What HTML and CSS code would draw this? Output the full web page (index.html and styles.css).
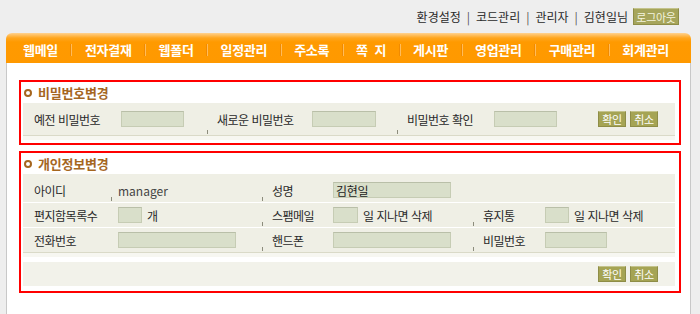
FILE: index.html
```html
<!DOCTYPE html>
<html lang="ko">
<head>
    <meta charset="UTF-8">
    <title>환경설정 - 개인정보변경</title>
    <link rel="stylesheet" href="styles.css">
</head>
<body>
    <div class="wrap">
        <div class="topbar">
            <span>환경설정</span><span class="bar">|</span>
            <span>코드관리</span><span class="bar">|</span>
            <span>관리자</span><span class="bar">|</span>
            <span>김현일님</span>
            <button class="btn-logout">로그아웃</button>
        </div>

        <!-- 상단 메뉴 -->
        <ul class="gnb">
            <li>웹메일</li><li class="sep"></li>
            <li>전자결재</li><li class="sep"></li>
            <li>웹폴더</li><li class="sep"></li>
            <li>일정관리</li><li class="sep"></li>
            <li>주소록</li><li class="sep"></li>
            <li>쪽&nbsp; 지</li><li class="sep"></li>
            <li>게시판</li><li class="sep"></li>
            <li>영업관리</li><li class="sep"></li>
            <li>구매관리</li><li class="sep"></li>
            <li>회계관리</li>
        </ul>

        <div class="content">
            <!-- 비밀번호변경 -->
            <div class="box">
                <h3 class="box-title"><span class="dot"></span>비밀번호변경</h3>
                <div class="strip">
                    <div class="pw-row">
                        <div class="pw-lbl1">예전 비밀번호</div>
                        <div class="pw-fld1"><input type="password" class="fld w63"></div>
                        <div class="pw-lbl2 tk">새로운 비밀번호</div>
                        <div class="pw-fld2"><input type="password" class="fld w64"></div>
                        <div class="pw-lbl3 tk">비밀번호 확인</div>
                        <div class="pw-fld3"><input type="password" class="fld w63"></div>
                        <div class="btns">
                            <button class="btn">확인</button>
                            <button class="btn">취소</button>
                        </div>
                    </div>
                </div>
            </div>

            <!-- 개인정보변경 -->
            <div class="box box2">
                <h3 class="box-title"><span class="dot"></span>개인정보변경</h3>
                <div class="strip">
                    <div class="info">
                        <div class="info-row">
                            <div class="c-lbl">아이디</div>
                            <div class="c-val tk latin">manager</div>
                            <div class="c-lbl2 tk">성명</div>
                            <div class="c-val span3"><input type="text" class="fld w118 filled" value="김현일"></div>
                        </div>
                        <div class="info-row">
                            <div class="c-lbl">편지함목록수</div>
                            <div class="c-val"><input type="text" class="fld w24"><span class="unit">개</span></div>
                            <div class="c-lbl2 tk">스팸메일</div>
                            <div class="c-val"><input type="text" class="fld w25"><span class="unit">일 지나면 삭제</span></div>
                            <div class="c-lbl3 tk">휴지통</div>
                            <div class="c-val"><input type="text" class="fld w24"><span class="unit">일 지나면 삭제</span></div>
                        </div>
                        <div class="info-row">
                            <div class="c-lbl">전화번호</div>
                            <div class="c-val"><input type="text" class="fld w118"></div>
                            <div class="c-lbl2 tk">핸드폰</div>
                            <div class="c-val"><input type="text" class="fld w118"></div>
                            <div class="c-lbl3 tk">비밀번호</div>
                            <div class="c-val"><input type="password" class="fld w62"></div>
                        </div>
                    </div>
                </div>
                <div class="btn-area">
                    <button class="btn">확인</button>
                    <button class="btn">취소</button>
                </div>
            </div>
        </div>
    </div>
</body>
</html>
```

FILE: styles.css
```css
body {
    margin: 0;
    background-color: #eeeeee;
    font-family: "Noto Sans CJK KR", "Noto Sans", sans-serif;
    font-size: 12px;
    color: #2a2a2a;
    letter-spacing: -0.5px;
}

.wrap {
    width: 685px;
    margin-left: 6px;
}

/* 상단 링크 */
.topbar {
    height: 33px;
    display: flex;
    justify-content: flex-end;
    align-items: center;
    padding-right: 12px;
    letter-spacing: 0;
}

.topbar .bar {
    margin: 0 6px;
    color: #555;
}

.btn-logout {
    margin-left: 5px;
    width: 46px;
    height: 17px;
    padding: 0;
    border: 1px solid #8e8d47;
    border-top-color: #c4c38c;
    background-color: #a6a55b;
    color: #f4f4de;
    font-family: inherit;
    font-size: 11px;
    letter-spacing: -0.3px;
    line-height: 14px;
}

/* 메뉴 */
.gnb {
    list-style: none;
    margin: 0;
    height: 30px;
    padding: 3px 22px 0 17px;
    box-sizing: border-box;
    display: flex;
    justify-content: space-between;
    align-items: center;
    background: linear-gradient(#ffd290 0, #ffa61e 5px, #ff9a00 9px, #ff9900 100%);
    border-radius: 6px 6px 0 0;
    color: #fff;
    font-size: 13px;
    font-weight: bold;
    letter-spacing: -0.3px;
}

.gnb .sep {
    width: 0;
    height: 12px;
    border-left: 1px solid #f08a00;
    border-right: 1px solid #ffbc5c;
}

/* 본문 */
.content {
    background-color: #fff;
    border-left: 1px solid #c8c8c8;
    border-right: 1px solid #c8c8c8;
    padding: 17px 9px 0 12px;
    min-height: 234px;
}

.box {
    border: 2px solid #ff0000;
    padding: 0 4px 3px 2px;
}

.box2 {
    margin-top: 6px;
    padding-bottom: 5px;
}

.box-title {
    margin: 0;
    height: 21px;
    display: flex;
    align-items: center;
    padding-left: 1px;
    color: #a5661f;
    font-size: 13px;
    letter-spacing: -0.2px;
}

.dot {
    width: 4px;
    height: 4px;
    border: 2px solid #a5661f;
    border-radius: 50%;
    margin-right: 6px;
}

.strip {
    background-color: #f7f7f1;
    padding-bottom: 4px;
}

/* 입력칸 */
.fld {
    box-sizing: border-box;
    height: 16px;
    padding: 0 2px;
    border: 1px solid #c6ccb4;
    border-top-color: #b9bfa8;
    background-color: #d9dfca;
    font-family: inherit;
    font-size: 12px;
    color: #222;
    vertical-align: middle;
}

.filled {
    letter-spacing: -0.3px;
}

.w24 { width: 24px; }
.w25 { width: 25px; }
.w62 { width: 62px; }
.w63 { width: 63px; }
.w64 { width: 64px; }
.w118 { width: 118px; }

.btn {
    width: 28px;
    height: 16px;
    padding: 0;
    border: 1px solid #8e8d47;
    border-top-color: #c4c38c;
    background-color: #a5a454;
    color: #fff;
    font-family: inherit;
    font-size: 11px;
    letter-spacing: -0.3px;
    line-height: 13px;
}

.tk {
    background-image: linear-gradient(#8c8c7c, #8c8c7c);
    background-size: 1px 4px;
    background-position: left 0 bottom 1px;
    background-repeat: no-repeat;
}

/* 비밀번호 줄 */
.pw-row {
    height: 32px;
    display: flex;
    align-items: center;
    background-color: #efefe5;
    border-bottom: 1px solid #dadac8;
}

.pw-row > div {
    height: 100%;
    display: flex;
    align-items: center;
    box-sizing: border-box;
}

.pw-lbl1 { width: 90px; padding-left: 11px; }
.pw-fld1 { width: 94px; padding-left: 8px; }
.pw-lbl2 { width: 97px; padding-left: 10px; }
.pw-fld2 { width: 93px; padding-left: 8px; }
.pw-lbl3 { width: 89px; padding-left: 10px; }
.pw-fld3 { flex: 1; padding-left: 8px; }

.pw-row .btns,
.btn-area {
    display: flex;
    align-items: center;
    gap: 4px;
    padding-right: 17px;
}

/* 개인정보 표 */
.info {
    background-color: #efefe5;
    padding-top: 4px;
    border-bottom: 1px solid #dadac8;
}

.info-row {
    height: 24px;
    display: grid;
    grid-template-columns: 88px 151px 64px 147px 65px 1fr;
}

.info-row + .info-row {
    border-top: 1px solid #fff;
}

.info-row > div {
    display: flex;
    align-items: center;
    box-sizing: border-box;
}

.c-lbl { padding-left: 11px; }
.c-lbl2 { padding-left: 10px; }
.c-lbl3 { padding-left: 10px; }
.c-val { padding-left: 7px; }

.span3 {
    grid-column: span 3;
}

.latin {
    letter-spacing: 0;
    color: #444;
}

.unit {
    margin-left: 5px;
}

.btn-area {
    margin-top: 5px;
    height: 24px;
    justify-content: flex-end;
    background-color: #f2f2ea;
}
```
